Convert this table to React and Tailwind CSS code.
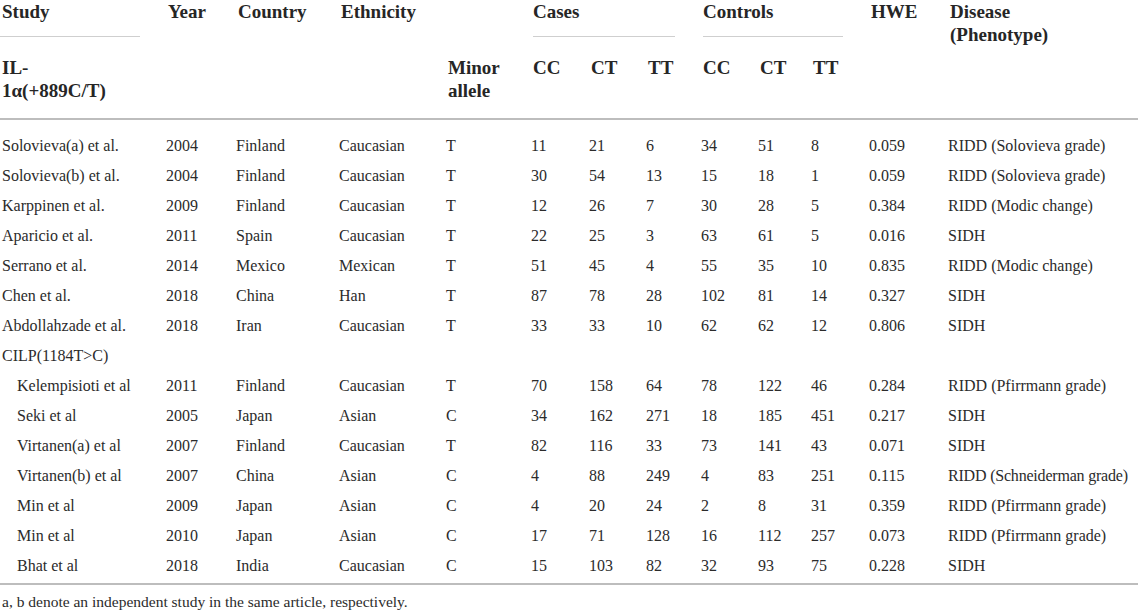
const rows = [
  { study: 'Solovieva(a) et al.', year: '2004', country: 'Finland', eth: 'Caucasian', minor: 'T', cases: ['11', '21', '6'], controls: ['34', '51', '8'], hwe: '0.059', disease: 'RIDD (Solovieva grade)' },
  { study: 'Solovieva(b) et al.', year: '2004', country: 'Finland', eth: 'Caucasian', minor: 'T', cases: ['30', '54', '13'], controls: ['15', '18', '1'], hwe: '0.059', disease: 'RIDD (Solovieva grade)' },
  { study: 'Karppinen et al.', year: '2009', country: 'Finland', eth: 'Caucasian', minor: 'T', cases: ['12', '26', '7'], controls: ['30', '28', '5'], hwe: '0.384', disease: 'RIDD (Modic change)' },
  { study: 'Aparicio et al.', year: '2011', country: 'Spain', eth: 'Caucasian', minor: 'T', cases: ['22', '25', '3'], controls: ['63', '61', '5'], hwe: '0.016', disease: 'SIDH' },
  { study: 'Serrano et al.', year: '2014', country: 'Mexico', eth: 'Mexican', minor: 'T', cases: ['51', '45', '4'], controls: ['55', '35', '10'], hwe: '0.835', disease: 'RIDD (Modic change)' },
  { study: 'Chen et al.', year: '2018', country: 'China', eth: 'Han', minor: 'T', cases: ['87', '78', '28'], controls: ['102', '81', '14'], hwe: '0.327', disease: 'SIDH' },
  { study: 'Abdollahzade et al.', year: '2018', country: 'Iran', eth: 'Caucasian', minor: 'T', cases: ['33', '33', '10'], controls: ['62', '62', '12'], hwe: '0.806', disease: 'SIDH' },
  { group: 'CILP(1184T>C)' },
  { study: 'Kelempisioti et al', sub: true, year: '2011', country: 'Finland', eth: 'Caucasian', minor: 'T', cases: ['70', '158', '64'], controls: ['78', '122', '46'], hwe: '0.284', disease: 'RIDD (Pfirrmann grade)' },
  { study: 'Seki et al', sub: true, year: '2005', country: 'Japan', eth: 'Asian', minor: 'C', cases: ['34', '162', '271'], controls: ['18', '185', '451'], hwe: '0.217', disease: 'SIDH' },
  { study: 'Virtanen(a) et al', sub: true, year: '2007', country: 'Finland', eth: 'Caucasian', minor: 'T', cases: ['82', '116', '33'], controls: ['73', '141', '43'], hwe: '0.071', disease: 'SIDH' },
  { study: 'Virtanen(b) et al', sub: true, year: '2007', country: 'China', eth: 'Asian', minor: 'C', cases: ['4', '88', '249'], controls: ['4', '83', '251'], hwe: '0.115', disease: 'RIDD (Schneiderman grade)', tight: true },
  { study: 'Min et al', sub: true, year: '2009', country: 'Japan', eth: 'Asian', minor: 'C', cases: ['4', '20', '24'], controls: ['2', '8', '31'], hwe: '0.359', disease: 'RIDD (Pfirrmann grade)' },
  { study: 'Min et al', sub: true, year: '2010', country: 'Japan', eth: 'Asian', minor: 'C', cases: ['17', '71', '128'], controls: ['16', '112', '257'], hwe: '0.073', disease: 'RIDD (Pfirrmann grade)' },
  { study: 'Bhat et al', sub: true, year: '2018', country: 'India', eth: 'Caucasian', minor: 'C', cases: ['15', '103', '82'], controls: ['32', '93', '75'], hwe: '0.228', disease: 'SIDH' },
];

const widths = [166, 70, 103, 107, 85, 58, 57, 55, 57, 53, 58, 79, 190];

export default function App() {
  return (
    <div className="w-[1145px] h-[611px] bg-white overflow-hidden text-[#2b2b2b]" style={{ fontFamily: '"Liberation Serif", "Times New Roman", serif' }}>
      <table className="w-[1138px] border-collapse table-fixed">
        <colgroup>
          {widths.map((w, i) => <col key={i} style={{ width: w }} />)}
        </colgroup>
        <thead className="text-[19px] font-bold leading-[23px] text-[#262626]">
          <tr className="align-top">
            <th className="text-left font-bold p-0">
              <div className="pl-[2px] h-[37px] border-b border-[#cfcfcf] mr-[26px]">Study</div>
            </th>
            <th rowSpan={2} className="text-left font-bold pl-[2px] p-0 align-top">Year</th>
            <th rowSpan={2} className="text-left font-bold pl-[2px] p-0 align-top">Country</th>
            <th rowSpan={2} className="text-left font-bold pl-[2px] p-0 align-top">Ethnicity</th>
            <th className="p-0"></th>
            <th colSpan={3} className="text-left font-bold p-0 pl-[2px]">
              <div className="h-[37px] border-b border-[#cfcfcf] mr-[26px]">Cases</div>
            </th>
            <th colSpan={3} className="text-left font-bold p-0 pl-[2px]">
              <div className="h-[37px] border-b border-[#cfcfcf] mr-[26px]">Controls</div>
            </th>
            <th rowSpan={2} className="text-left font-bold pl-[2px] p-0 align-top">HWE</th>
            <th rowSpan={2} className="text-left font-bold pl-[2px] p-0 align-top">Disease<br />(Phenotype)</th>
          </tr>
          <tr className="align-top border-b-2 border-[#bdbdbd]">
            <th className="text-left font-bold pl-[2px] pt-[19px] pb-[16px]">IL-<br />1α(+889C/T)</th>
            <th className="text-left font-bold pl-[2px] pt-[19px] pb-[16px]">Minor<br />allele</th>
            <th className="text-left font-bold pl-[2px] pt-[19px]">CC</th>
            <th className="text-left font-bold pl-[2px] pt-[19px]">CT</th>
            <th className="text-left font-bold pl-[2px] pt-[19px]">TT</th>
            <th className="text-left font-bold pl-[2px] pt-[19px]">CC</th>
            <th className="text-left font-bold pl-[2px] pt-[19px]">CT</th>
            <th className="text-left font-bold pl-[2px] pt-[19px]">TT</th>
          </tr>
        </thead>
        <tbody className="text-[16px] leading-[20px]">
          <tr><td colSpan={13} className="h-[12px] p-0"></td></tr>
          {rows.map((r, i) =>
            r.group ? (
              <tr key={i} className="h-[30px]">
                <td colSpan={13} className="pl-[2px] p-0">{r.group}</td>
              </tr>
            ) : (
              <tr key={i} className="h-[30px]">
                <td className={`p-0 ${r.sub ? 'pl-[17px]' : 'pl-[2px]'} whitespace-nowrap`}>{r.study}</td>
                <td className="p-0">{r.year}</td>
                <td className="p-0">{r.country}</td>
                <td className="p-0">{r.eth}</td>
                <td className="p-0">{r.minor}</td>
                {r.cases.map((c, j) => <td key={'a' + j} className="p-0">{c}</td>)}
                {r.controls.map((c, j) => <td key={'b' + j} className="p-0">{c}</td>)}
                <td className="p-0">{r.hwe}</td>
                <td className={`p-0 whitespace-nowrap ${r.tight ? 'tracking-[-0.2px]' : ''}`}>{r.disease}</td>
              </tr>
            )
          )}
          <tr className="border-b-2 border-[#bdbdbd]"><td colSpan={13} className="h-[3px] p-0"></td></tr>
        </tbody>
      </table>
      <p className="pl-[2px] pt-[7px] text-[15.5px] leading-[20px]">a, b denote an independent study in the same article, respectively.</p>
    </div>
  );
}
